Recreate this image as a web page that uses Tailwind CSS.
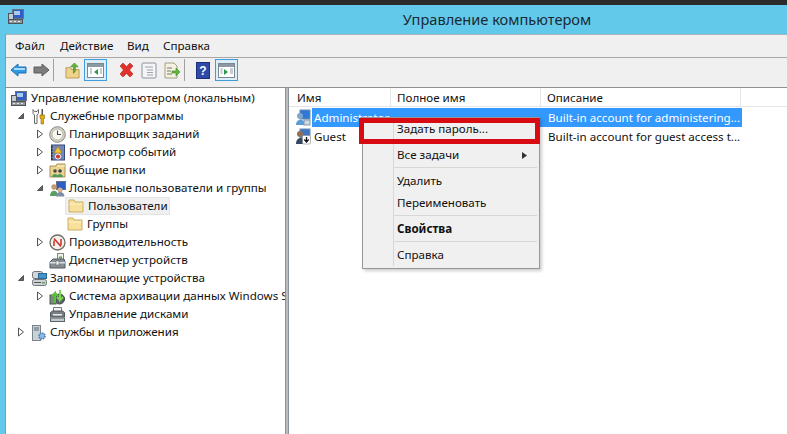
<!DOCTYPE html>
<html lang="ru"><head><meta charset="utf-8"><script src="https://cdn.jsdelivr.net/npm/@tailwindcss/browser@4"></script></head>
<body class="m-0 overflow-hidden">
<div class="relative w-[787px] h-[434px] overflow-hidden bg-[#63c9ea] flex flex-col font-['Noto_Sans',sans-serif] text-[11.6px] text-[#111]">
  <div class="h-[5px] bg-[#2b2b2b] shrink-0"></div>
  <div class="h-[29px] shrink-0 relative flex items-center justify-center pl-[207px] text-[14.6px] text-[#1a2a33]">
    <svg class="absolute left-[7px] top-[3px]" width="17" height="17" viewBox="0 0 17 17"><rect x="5.500" y="1.500" width="11" height="9" fill="#2f5fc4" stroke="#6a7480"/><rect x="7" y="3" width="6" height="4" fill="#a8c8f2"/><rect x="1.500" y="5.500" width="5" height="6" fill="#c4cad0" stroke="#4d555c"/><rect x="1.500" y="11.500" width="14" height="4" fill="#8f959b" stroke="#4d555c"/><path d="M3 13.500h2M7 13.500h2M11 13.500h2" stroke="#e8e8e8"/></svg>
    Управление компьютером
  </div>
  <div class="flex-1 min-h-0 ml-[5px] border-l border-[#8a9aa5] flex flex-col bg-[#f0f0f0]">
    <div class="h-[24px] shrink-0 border-t border-[#a9b4ba] border-b border-b-[#a8a8a8] flex items-center relative">
      <span class="absolute left-[9px]">Файл</span><span class="absolute left-[54px]">Действие</span><span class="absolute left-[121px]">Вид</span><span class="absolute left-[157px]">Справка</span>
    </div>
    <div class="h-[30px] shrink-0 border-b border-[#8f8f8f] flex items-start pt-px pl-[4px] [&>svg]:mt-[3px]">
      <svg width="17" height="16" viewBox="0 0 17 16"><path d="M1 8 8 2v3h8v6H8v3z" fill="#2f9be3" stroke="#1b6fb5"/><path d="M4 7h11" stroke="#a6dcfa" stroke-width="2"/></svg>
      <svg class="ml-[6px]" width="17" height="16" viewBox="0 0 17 16"><path d="M16 8 9 2v3H1v6h8v3z" fill="#7d7d7d" stroke="#5c5c5c"/></svg>
      <div class="w-px h-[22px] bg-[#a0a0a0] ml-[3px]"></div>
      <svg class="ml-[11px]" width="15" height="17" viewBox="0 0 16 18"><path d="M1 6h5l1 2h8v9H1z" fill="#efd38a" stroke="#b69a58"/><path d="M9 12V5H6l4-4 4 4h-3v5z" fill="#63b33d" stroke="#3e8a22" stroke-width=".7"/></svg>
      <div class="ml-[4px] w-[23px] h-[22px] border border-[#3c9fdc] bg-[#dceefa] flex items-center justify-center"><svg width="17" height="15" viewBox="0 0 17 15"><rect x=".5" y=".5" width="16" height="14" fill="#fff" stroke="#7c8791"/><rect x="1" y="1" width="15" height="3" fill="#8c98a2"/><path d="M11 6v6L7 9z" fill="#2f9b4a"/><path d="M3 6h2M3 8h2M3 10h2M13 6h2M13 8h2M13 10h2" stroke="#8c98a2"/></svg></div>
      <svg class="ml-[11px]" width="17" height="16" viewBox="0 0 17 16"><path d="M2 4 5 1l3.500 3.500L12 1l3 3-3.500 4L15 12l-3 3-3.500-3.500L5 15l-3-3 3.500-4z" fill="#e2302c" stroke="#b02320" stroke-width=".6"/></svg>
      <svg class="ml-[6px]" width="16" height="17" viewBox="0 0 16 17"><rect x="1" y="1" width="14" height="15" rx="1" fill="#f4f5f6" stroke="#8c949b"/><path d="M4 5h8M6 8h6M6 10.500h6M6 13h6" stroke="#9aa3ab"/></svg>
      <svg class="ml-[7px]" width="17" height="17" viewBox="0 0 17 17"><path d="M1 1h9l3 3v12H1z" fill="#f5f1df" stroke="#a49e86"/><path d="M3 6h5M3 9h4M3 12h5" stroke="#777"/><path d="M8 9h4V6l4 4-4 4v-3H8z" fill="#65b43c" stroke="#3f8a22" stroke-width=".6"/></svg>
      <div class="w-px h-[22px] bg-[#a0a0a0] ml-[3px]"></div>
      <svg class="ml-[11px]" width="14" height="17" viewBox="0 0 14 17"><rect x=".5" y=".5" width="13" height="16" fill="#2e49a8" stroke="#1e2f77"/><text x="7" y="13" text-anchor="middle" font-family="Liberation Sans" font-weight="700" font-size="12" fill="#fff">?</text></svg>
      <div class="ml-[5px] w-[23px] h-[22px] border border-[#3c9fdc] bg-[#dceefa] flex items-center justify-center"><svg width="17" height="15" viewBox="0 0 17 15"><rect x=".5" y=".5" width="16" height="14" fill="#fff" stroke="#7c8791"/><rect x="1" y="1" width="15" height="3" fill="#8c98a2"/><path d="M6 6v6l4-3z" fill="#2f9b4a"/><path d="M2.500 6h2M2.500 8h2M2.500 10h2M12 6h3M12 8h3M12 10h3" stroke="#8c98a2"/></svg></div>
    </div>
    <div class="flex-1 min-h-0 flex bg-[#b9bdc0]">
      <div class="w-[280px] shrink-0 bg-white border-r border-[#8a939a] overflow-hidden pt-px whitespace-nowrap [&_svg]:shrink-0">
        <div class="h-[18px] flex items-center pl-[4px]">
          <svg width="17" height="17" viewBox="0 0 17 17"><rect x="5.500" y="1.500" width="11" height="9" fill="#2f5fc4" stroke="#6a7480"/><rect x="7" y="3" width="6" height="4" fill="#a8c8f2"/><rect x="1.500" y="5.500" width="5" height="6" fill="#c4cad0" stroke="#4d555c"/><rect x="1.500" y="11.500" width="14" height="4" fill="#8f959b" stroke="#4d555c"/><path d="M3 13.500h2M7 13.500h2M11 13.500h2" stroke="#e8e8e8"/></svg>
          <span class="ml-[4px]">Управление компьютером (локальным)</span>
        </div>
        <div class="h-[18px] flex items-center pl-[11px]">
          <svg class="mr-[6px]" width="8" height="8" viewBox="0 0 8 8"><path d="M6.500 1.500v5h-5z" fill="#666" stroke="#555"/></svg>
          <svg width="16" height="17" viewBox="0 0 16 17"><path d="M2 1.500v4l1.500 1.500v8.500h2.500V7L7.500 5.500v-4L6 3.500H3.500z" fill="#fbfbfb" stroke="#6b6b6b"/><rect x="10.500" y="1" width="1.500" height="6" fill="#555"/><path d="M9 7h4.500v3.500h-1V16h-2.500v-5.500H9z" fill="#eaaa10" stroke="#8a6a10" stroke-width=".6"/></svg>
          <span class="ml-[3px]">Служебные программы</span>
        </div>
        <div class="h-[18px] flex items-center pl-[30px]">
          <svg class="mr-[5px]" width="8" height="10" viewBox="0 0 8 10"><path d="M1.500 1v8l5-4z" fill="#fff" stroke="#555"/></svg>
          <svg width="17" height="17" viewBox="0 0 17 17"><circle cx="8.500" cy="8.500" r="7.800" fill="#d8d4c6" stroke="#868680"/><circle cx="8.500" cy="8.500" r="5.500" fill="#fafaf4" stroke="#a8a595" stroke-width=".8"/><path d="M8.500 4.500v4h3.500" fill="none" stroke="#4a4a4a" stroke-width="1.100"/></svg>
          <span class="ml-[3px]">Планировщик заданий</span>
        </div>
        <div class="h-[18px] flex items-center pl-[30px]">
          <svg class="mr-[5px]" width="8" height="10" viewBox="0 0 8 10"><path d="M1.500 1v8l5-4z" fill="#fff" stroke="#555"/></svg>
          <svg width="17" height="17" viewBox="0 0 17 17"><rect x="2.500" y="1" width="13" height="15" fill="#7489b8" stroke="#39497a"/><path d="M2 3h2M2 6h2M2 9h2M2 12h2M2 15h2" stroke="#222"/><path d="M9 2.500 13 9H5z" fill="#f2c62e" stroke="#9c7b10" stroke-width=".6"/><circle cx="9" cy="12.500" r="2.600" fill="#cc3a33" stroke="#fff"/></svg>
          <span class="ml-[3px]">Просмотр событий</span>
        </div>
        <div class="h-[18px] flex items-center pl-[30px]">
          <svg class="mr-[5px]" width="8" height="10" viewBox="0 0 8 10"><path d="M1.500 1v8l5-4z" fill="#fff" stroke="#555"/></svg>
          <svg width="17" height="17" viewBox="0 0 17 17"><path d="M1 4h6l1-2h8v13H1z" fill="#ecd48f" stroke="#a99155"/><path d="M8 4h8" stroke="#fff5cf"/><circle cx="6" cy="9" r="1.800" fill="#4a4a4a"/><circle cx="11" cy="9" r="1.800" fill="#39405a"/><path d="M3 15c0-4 6-4 6 0zM8 15c0-4 6-4 6 0z" fill="#4f9a5a"/></svg>
          <span class="ml-[3px]">Общие папки</span>
        </div>
        <div class="h-[18px] flex items-center pl-[30px]">
          <svg class="mr-[5px]" width="8" height="8" viewBox="0 0 8 8"><path d="M6.500 1.500v5h-5z" fill="#666" stroke="#555"/></svg>
          <svg width="17" height="17" viewBox="0 0 17 17"><rect x="7.500" y="1.500" width="9" height="8" fill="#2f5fc4" stroke="#6a7480"/><circle cx="5" cy="7" r="2.700" fill="#c29a74"/><path d="M1 16c0-7 8-7 8 0z" fill="#5a9c62"/><circle cx="11" cy="10" r="2.500" fill="#d6b08f"/><path d="M7 16.500c0-6 8.500-6 8.500 0z" fill="#7f8fa3"/></svg>
          <span class="ml-[3px]">Локальные пользователи и группы</span>
        </div>
        <div class="h-[18px] flex items-center pl-[59px]">
          <div class="h-[18px] w-[105px] pl-[2px] bg-[#f0f0f0] border border-[#e4e4e4] flex items-center">
            <svg width="16" height="14" viewBox="0 0 16 14"><path d="M1 1h5l1 2h8v10H1z" fill="#f7e09a" stroke="#c9ad62"/><path d="M1.500 5h13" stroke="#fdf1c6"/></svg>
            <span class="ml-[4px]">Пользователи</span>
          </div>
        </div>
        <div class="h-[18px] flex items-center pl-[61px]">
          <svg width="16" height="14" viewBox="0 0 16 14"><path d="M1 1h5l1 2h8v10H1z" fill="#f7e09a" stroke="#c9ad62"/><path d="M1.500 5h13" stroke="#fdf1c6"/></svg>
          <span class="ml-[4px]">Группы</span>
        </div>
        <div class="h-[18px] flex items-center pl-[30px]">
          <svg class="mr-[5px]" width="8" height="10" viewBox="0 0 8 10"><path d="M1.500 1v8l5-4z" fill="#fff" stroke="#555"/></svg>
          <svg width="17" height="17" viewBox="0 0 17 17"><circle cx="8.500" cy="8.500" r="7.500" fill="#f4f2ed" stroke="#6f6c66" stroke-width="1.300"/><path d="M5 4.500l7 8M5 12V6.500M12 11V5" fill="none" stroke="#cc2e28" stroke-width="1.500"/></svg>
          <span class="ml-[3px]">Производительность</span>
        </div>
        <div class="h-[18px] flex items-center pl-[43px]">
          <svg width="17" height="17" viewBox="0 0 17 17"><rect x="8.500" y="1.500" width="6" height="6" fill="#eef1e8" stroke="#7d8b80"/><path d="M10 5.500h3" stroke="#5aa35a" stroke-width="2"/><path d="M1 10l3-3h11l1 3v6H1z" fill="#868e96" stroke="#535b62"/><rect x="1" y="10" width="15" height="1.500" fill="#dde0e3"/><rect x="7" y="9" width="3" height="4" fill="#f2f2f2" stroke="#555" stroke-width=".5"/></svg>
          <span class="ml-[3px]">Диспетчер устройств</span>
        </div>
        <div class="h-[18px] flex items-center pl-[11px]">
          <svg class="mr-[6px]" width="8" height="8" viewBox="0 0 8 8"><path d="M6.500 1.500v5h-5z" fill="#666" stroke="#555"/></svg>
          <svg width="16" height="17" viewBox="0 0 16 17"><rect x="1.500" y="1.500" width="10" height="7" rx="2" fill="#d2d6d9" stroke="#6d7378"/><rect x="1.500" y="9.500" width="14" height="6" rx="2" fill="#cfd3d6" stroke="#6d7378"/><rect x="7.500" y="3.500" width="8" height="5" fill="#3f95cc" stroke="#2c6a94"/><path d="M3 12.500h7" stroke="#555"/><rect x="11" y="12" width="3" height="1.500" fill="#5aa35a"/></svg>
          <span class="ml-[3px]">Запоминающие устройства</span>
        </div>
        <div class="h-[18px] flex items-center pl-[30px]">
          <svg class="mr-[5px]" width="8" height="10" viewBox="0 0 8 10"><path d="M1.500 1v8l5-4z" fill="#fff" stroke="#555"/></svg>
          <svg width="17" height="17" viewBox="0 0 17 17"><circle cx="10.500" cy="11" r="5" fill="#5c6469" stroke="#3a4044"/><rect x="1" y="7" width="6" height="9" fill="#7a8a80" stroke="#4a5a50"/><path d="M6 15V5L3 8M6 5l3 3" fill="none" stroke="#5cc23a" stroke-width="2"/><path d="M11 2v10l3-3M11 12l-3-3" fill="none" stroke="#7ad64e" stroke-width="2"/></svg>
          <span class="ml-[3px]">Система архивации данных Windows Server</span>
        </div>
        <div class="h-[18px] flex items-center pl-[43px]">
          <svg width="17" height="17" viewBox="0 0 17 17"><path d="M4.500 1.500h8v4h-8z" fill="#f1f3f4" stroke="#727a80"/><path d="M1.500 6.500l2-1.500h10l2 1.500V11h-14z" fill="#777f85" stroke="#4f565b"/><rect x="4" y="8" width="9" height="1.500" fill="#e9ecee"/><rect x="1.500" y="12" width="14" height="3.500" fill="#c4c9cd" stroke="#5c646b"/></svg>
          <span class="ml-[3px]">Управление дисками</span>
        </div>
        <div class="h-[18px] flex items-center pl-[11px]">
          <svg class="mr-[6px]" width="8" height="10" viewBox="0 0 8 10"><path d="M1.500 1v8l5-4z" fill="#fff" stroke="#555"/></svg>
          <svg width="16" height="17" viewBox="0 0 16 17"><rect x="1.500" y="1.500" width="8" height="15" fill="#c8d1d8" stroke="#7b848b"/><path d="M3 4h5M3 6h5" stroke="#5d6870"/><circle cx="11" cy="12" r="3" fill="#8cb8e2" stroke="#4b7db0" stroke-width="1.600" stroke-dasharray="1.500 .8"/></svg>
          <span class="ml-[3px]">Службы и приложения</span>
        </div>
      </div>
      <div class="w-[2px] shrink-0"></div>
      <div class="flex-1 min-w-0 bg-white border-l border-[#8a939a] whitespace-nowrap">
        <div class="h-[19px] flex border-b border-[#e5e5e5]">
          <div class="w-[102px] pl-[8px] pt-[2px] border-r border-[#e5e5e5] flex items-center">Имя</div>
          <div class="w-[150px] pl-[6px] pt-[2px] border-r border-[#e5e5e5] flex items-center">Полное имя</div>
          <div class="w-[200px] pl-[6px] pt-[2px] border-r border-[#e5e5e5] flex items-center">Описание</div>
        </div>
        <div class="h-[20px] flex items-center pl-[6px]">
          <svg class="shrink-0" width="16" height="17" viewBox="0 0 16 17"><rect x="5" y="1" width="10" height="9" fill="#2f78d6" stroke="#6a8bb0"/><circle cx="5" cy="7" r="3" fill="#7ea8cf"/><path d="M1 16c0-7 9-7 9 0z" fill="#5c9bd6"/><rect x="9" y="11" width="6" height="5" fill="#cfd9e3" stroke="#8a97a3"/></svg>
          <div class="ml-px w-[430px] h-[19px] bg-[#3399ff] text-white flex items-center pl-[2px] pt-[2px]">
            <span class="w-[234px] shrink-0">Administrator</span><span>Built-in account for administering...</span>
          </div>
        </div>
        <div class="h-[19px] flex items-center pl-[6px]">
          <svg class="shrink-0" width="16" height="17" viewBox="0 0 16 17"><rect x="5" y="1" width="10" height="9" fill="#3f76c4" stroke="#6a8bb0"/><circle cx="5" cy="6" r="3" fill="#8f6f57"/><path d="M1 16c0-8 9-8 9 0z" fill="#33475e"/><rect x="7.500" y="7.500" width="8" height="8.500" rx="1" fill="#fff" stroke="#888" stroke-width=".6"/><path d="M11.500 9v4.500M9.300 11.500l2.200 2.500 2.200-2.500" fill="none" stroke="#111" stroke-width="1.300"/></svg>
          <span class="ml-px pl-[2px] w-[236px] shrink-0">Guest</span><span>Built-in account for guest access t...</span>
        </div>
      </div>
    </div>
  </div>
  <div class="absolute left-[362px] top-[117px] w-[178px] h-[152px] bg-[#f0f0f0] border border-[#979797] shadow-[2px_2px_3px_rgba(0,0,0,.2)]">
    <div class="absolute left-[30px] top-[4px] bottom-[2px] w-px bg-[#d7d7d7]"></div>
    <div class="absolute left-[34px] top-[2px] h-[18px] flex items-center">Задать пароль...</div>
    <div class="absolute left-[34px] top-[28px] h-[18px] flex items-center">Все задачи</div>
    <svg class="absolute right-[12px] top-[34px]" width="5" height="7" viewBox="0 0 5 7"><path d="M0 0l5 3.500L0 7z" fill="#333"/></svg>
    <div class="absolute left-[31px] right-[2px] top-[49px] h-px bg-[#d7d7d7]"></div>
    <div class="absolute left-[34px] top-[54px] h-[18px] flex items-center">Удалить</div>
    <div class="absolute left-[34px] top-[76px] h-[18px] flex items-center">Переименовать</div>
    <div class="absolute left-[31px] right-[2px] top-[97px] h-px bg-[#d7d7d7]"></div>
    <div class="absolute left-[34px] top-[102px] h-[18px] flex items-center font-bold">Свойства</div>
    <div class="absolute left-[31px] right-[2px] top-[123px] h-px bg-[#d7d7d7]"></div>
    <div class="absolute left-[34px] top-[128px] h-[18px] flex items-center">Справка</div>
  </div>
  <div class="absolute left-[359px] top-[118px] w-[181px] h-[26px] border-[5px] border-[#d80a12]"></div>
</div>
</body></html>
